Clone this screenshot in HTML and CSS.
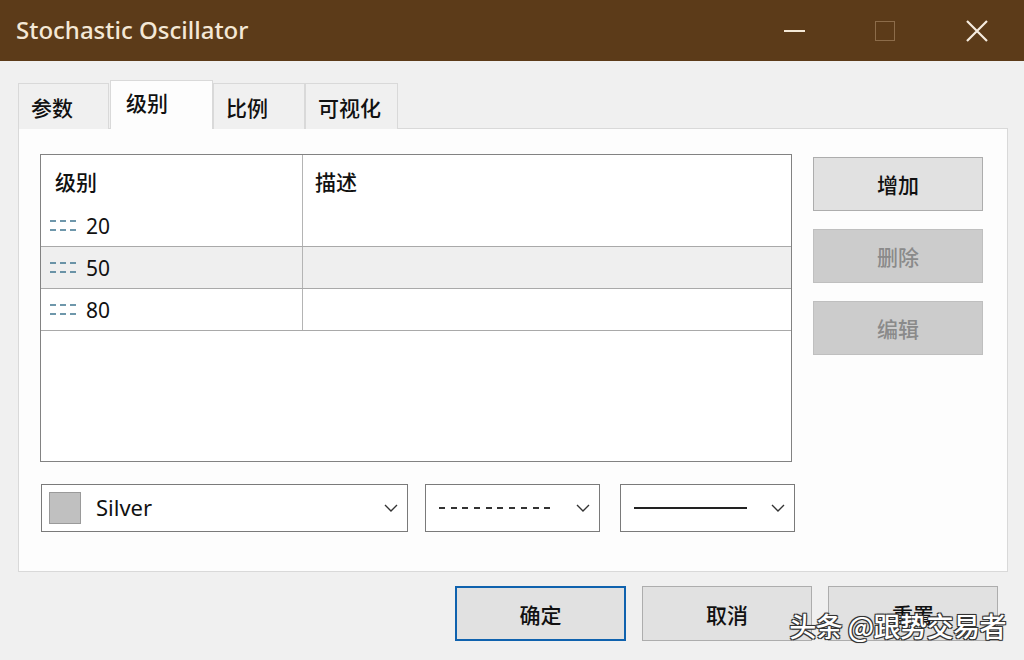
FILE: index.html
```html
<!DOCTYPE html>
<html lang="zh-CN">
<head>
  <meta charset="UTF-8">
  <title>Stochastic Oscillator</title>
  <link rel="stylesheet" href="styles.css">
</head>
<body>
  <div class="window">
    <div class="titlebar">
      <span class="title">Stochastic Oscillator</span>
      <div class="controls">
        <span class="ctl ctl-min"></span>
        <span class="ctl ctl-max"></span>
        <svg class="ctl-close" width="22" height="22" viewBox="0 0 22 22">
          <path d="M1 1 L21 21 M21 1 L1 21" stroke="#f6ece0" stroke-width="2.2" fill="none"/>
        </svg>
      </div>
    </div>

    <div class="content">
      <div class="tabs">
        <div class="tab">参数</div>
        <div class="tab active">级别</div>
        <div class="tab">比例</div>
        <div class="tab">可视化</div>
      </div>

      <div class="panel">
        <div class="list-col">
          <div class="listview">
            <div class="lv-row lv-head">
              <div class="cell c1">级别</div>
              <div class="cell c2">描述</div>
            </div>
            <div class="lv-row item">
              <div class="cell c1">
                <svg class="lvl-icon" width="28" height="14" viewBox="0 0 28 14">
                  <path d="M0 2 H6 M10 2 H16 M20 2 H26 M0 11 H6 M10 11 H16 M20 11 H26" stroke="#3f7590" stroke-width="1.6" fill="none"/>
                </svg>
                20
              </div>
              <div class="cell c2"></div>
            </div>
            <div class="lv-row item selected">
              <div class="cell c1">
                <svg class="lvl-icon" width="28" height="14" viewBox="0 0 28 14">
                  <path d="M0 2 H6 M10 2 H16 M20 2 H26 M0 11 H6 M10 11 H16 M20 11 H26" stroke="#3f7590" stroke-width="1.6" fill="none"/>
                </svg>
                50
              </div>
              <div class="cell c2"></div>
            </div>
            <div class="lv-row item">
              <div class="cell c1">
                <svg class="lvl-icon" width="28" height="14" viewBox="0 0 28 14">
                  <path d="M0 2 H6 M10 2 H16 M20 2 H26 M0 11 H6 M10 11 H16 M20 11 H26" stroke="#3f7590" stroke-width="1.6" fill="none"/>
                </svg>
                80
              </div>
              <div class="cell c2"></div>
            </div>
          </div>

          <div class="combos">
            <div class="combo combo-color">
              <span class="swatch"></span>
              <span class="combo-text">Silver</span>
              <svg class="chev" width="14" height="8" viewBox="0 0 14 8"><path d="M1 1 L7 7 L13 1" stroke="#333" stroke-width="1.4" fill="none"/></svg>
            </div>
            <div class="combo combo-style">
              <span class="line dashed"></span>
              <svg class="chev" width="14" height="8" viewBox="0 0 14 8"><path d="M1 1 L7 7 L13 1" stroke="#333" stroke-width="1.4" fill="none"/></svg>
            </div>
            <div class="combo combo-style">
              <span class="line solid"></span>
              <svg class="chev" width="14" height="8" viewBox="0 0 14 8"><path d="M1 1 L7 7 L13 1" stroke="#333" stroke-width="1.4" fill="none"/></svg>
            </div>
          </div>
        </div>

        <div class="side-buttons">
          <button class="btn">增加</button>
          <button class="btn" disabled>删除</button>
          <button class="btn" disabled>编辑</button>
        </div>
      </div>

      <div class="footer">
        <button class="btn btn-default">确定</button>
        <button class="btn">取消</button>
        <button class="btn">重置</button>
      </div>
    </div>

    <div class="watermark">头条 @跟势交易者</div>
  </div>
</body>
</html>
```

FILE: styles.css
```css
/* dialog window */
:root {
  --title-bg: #5c3b19;
  --title-fg: #f4e8d6;
  --face: #f0f0f0;
  --btn-face: #e1e1e1;
  --btn-border: #adadad;
  --ui-font: "Noto Sans", "Noto Sans CJK SC", sans-serif;
  --cjk-font: "Noto Sans CJK SC", sans-serif;
}

body {
  margin: 0;
  padding: 0;
  font-family: var(--ui-font);
  background-color: var(--face);
}

.window {
  position: relative;
  width: 1024px;
  height: 660px;
  overflow: hidden;
  background-color: var(--face);
}

.titlebar {
  height: 61px;
  background-color: var(--title-bg);
  display: flex;
  align-items: center;
  padding-left: 16px;
  box-sizing: border-box;
}

.title {
  color: var(--title-fg);
  font-size: 24px;
  font-weight: 500;
  margin-top: -2px;
}

.controls {
  margin-left: auto;
  display: flex;
  align-items: center;
  height: 100%;
}

.ctl-min {
  width: 21px;
  height: 2px;
  background-color: #f4e8d6;
  margin-right: 70px;
}

.ctl-max {
  width: 18px;
  height: 18px;
  border: 1px solid #8c6c4a;
  margin-right: 71px;
}

.ctl-close {
  margin-right: 36px;
}

.content {
  padding: 19px 16px 0 18px;
}

/* tabs */
.tabs {
  display: flex;
  align-items: flex-end;
  height: 49px;
  position: relative;
  z-index: 2;
  margin-bottom: -1px;
}

.tab {
  height: 46px;
  box-sizing: border-box;
  border: 1px solid #d9d9d9;
  border-bottom: none;
  background-color: #f0f0f0;
  font-family: var(--cjk-font);
  font-weight: 500;
  font-size: 21px;
  color: #111;
  display: flex;
  align-items: center;
  padding: 0 12px;
}

.tab:nth-child(1) { width: 91px; }
.tab:nth-child(3) { width: 92px; }
.tab:nth-child(4) { width: 93px; }

.tab.active {
  height: 49px;
  width: 103px;
  background-color: #fdfdfd;
  margin: 0 0 0 1px;
  padding: 0 15px 6px;
  position: relative;
  z-index: 3;
}

.panel {
  height: 444px;
  box-sizing: border-box;
  border: 1px solid #d9d9d9;
  background-color: #fdfdfd;
  display: flex;
  padding: 25px 0 0 21px;
  gap: 21px;
}

.list-col {
  width: 752px;
  flex: none;
}

/* list view */
.listview {
  width: 752px;
  height: 308px;
  box-sizing: border-box;
  border: 1px solid #828282;
  background-color: #fff;
}

.lv-row {
  display: flex;
  height: 42px;
  border-bottom: 1px solid #a9a9a9;
  box-sizing: border-box;
}

.lv-row.lv-head {
  height: 50px;
  border-bottom: none;
}

.lv-row.selected {
  background-color: #efefef;
}

.cell {
  display: flex;
  align-items: center;
  font-size: 21px;
  color: #111;
  box-sizing: border-box;
}

.c1 {
  width: 262px;
  padding-left: 9px;
  border-right: 1px solid #b4b4b4;
}

.c2 {
  flex: 1;
  padding-left: 12px;
}

.lv-head .cell {
  font-family: var(--cjk-font);
  font-weight: 500;
  padding-left: 14px;
  padding-top: 2px;
}

.lv-head .c2 {
  padding-left: 12px;
}

.item .c1 {
  gap: 8px;
}

.lvl-icon {
  flex: none;
}

/* combo boxes */
.combos {
  display: flex;
  margin-top: 22px;
  margin-left: 1px;
  width: 755px;
}

.combo {
  height: 48px;
  box-sizing: border-box;
  border: 1px solid #7a7a7a;
  background-color: #fff;
  display: flex;
  align-items: center;
  padding: 0 9px 0 7px;
}

.combo-color {
  width: 367px;
  margin-right: 17px;
}

.combo-style:nth-child(2) {
  width: 175px;
  margin-right: 20px;
  padding-left: 13px;
}

.combo-style:nth-child(3) {
  width: 175px;
  padding-left: 13px;
}

.swatch {
  width: 32px;
  height: 32px;
  box-sizing: border-box;
  background-color: #c0c0c0;
  border: 1px solid #9a9a9a;
  margin-right: 15px;
}

.combo-text {
  font-size: 22px;
  color: #111;
  margin-top: -2px;
}

.chev {
  margin-left: auto;
}

.line {
  height: 2px;
}

.line.dashed {
  width: 116px;
  background: repeating-linear-gradient(to right, #333 0, #333 6px, transparent 6px, transparent 11.7px);
}

.line.solid {
  width: 113px;
  background-color: #222;
}

/* buttons */
.side-buttons {
  display: flex;
  flex-direction: column;
  gap: 18px;
  padding-top: 3px;
}

.btn {
  width: 170px;
  height: 54px;
  box-sizing: border-box;
  border: 1px solid var(--btn-border);
  background-color: var(--btn-face);
  font-family: var(--cjk-font);
  font-weight: 500;
  font-size: 21px;
  color: #111;
  padding: 0;
  cursor: pointer;
}

.btn:disabled {
  background-color: #cccccc;
  border-color: #bfbfbf;
  color: #8a8a8a;
}

.footer {
  display: flex;
  justify-content: flex-end;
  gap: 16px;
  margin-top: 14px;
  padding-right: 10px;
}

.footer .btn {
  height: 55px;
}

.btn-default {
  width: 171px;
  border: 2px solid #0f62ae;
}

/* watermark */
.watermark {
  position: absolute;
  right: 18px;
  bottom: 15px;
  font-family: var(--cjk-font);
  font-weight: 500;
  font-size: 27px;
  color: #fff;
  text-shadow: -1px -1px 0 #333, 1px -1px 0 #333, -1px 1px 0 #333, 1px 1px 0 #333, 0 0 2px #000;
  letter-spacing: -0.5px;
}
```
